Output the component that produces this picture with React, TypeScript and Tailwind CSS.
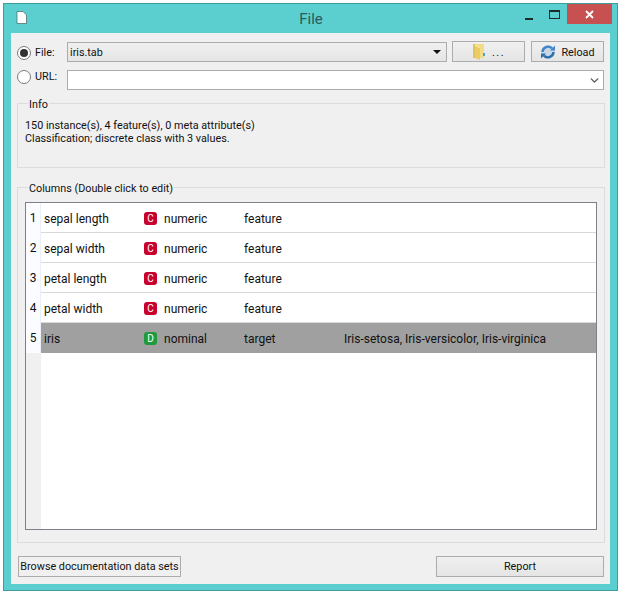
import { ChevronDown } from "lucide-react";

const rows = [
  { name: "sepal length", kind: "C", type: "numeric", role: "feature", values: "" },
  { name: "sepal width", kind: "C", type: "numeric", role: "feature", values: "" },
  { name: "petal length", kind: "C", type: "numeric", role: "feature", values: "" },
  { name: "petal width", kind: "C", type: "numeric", role: "feature", values: "" },
  { name: "iris", kind: "D", type: "nominal", role: "target", values: "Iris-setosa, Iris-versicolor, Iris-virginica" },
];

function Radio({ checked, className = "" }: { checked?: boolean; className?: string }) {
  return (
    <span className={`flex h-[14px] w-[14px] items-center justify-center rounded-full border border-[#7a7a7a] bg-white ${className}`}>
      {checked && <span className="h-[8px] w-[8px] rounded-full bg-[#333333]" />}
    </span>
  );
}

function FolderIcon() {
  return (
    <svg width="14" height="17" viewBox="0 0 14 17">
      <path d="M1 1h11v14H1z" fill="#f3dc86" />
      <path d="M1 1h2v14H1z" fill="#e2c25c" />
      <path d="M3 2l5 2v13l-5-2z" fill="#eccb62" />
      <path d="M8 4l-5-2v1l5 2z" fill="#fbeeb4" />
      <rect x="11" y="10" width="2" height="3" fill="#4aa3d8" />
    </svg>
  );
}

function ReloadIcon() {
  return (
    <svg width="16" height="16" viewBox="0 0 16 16" fill="none">
      <circle cx="8" cy="8" r="7" fill="#c9d8e6" />
      <path d="M2.5 8a5.5 5.5 0 0 1 9.5-3.6" stroke="#3f86c6" strokeWidth="2.4" />
      <path d="M10 6.6h5V1.6z" fill="#3f86c6" />
      <path d="M13.5 8A5.5 5.5 0 0 1 4 11.6" stroke="#2f6fa8" strokeWidth="2.4" />
      <path d="M6 9.4H1v5z" fill="#2f6fa8" />
    </svg>
  );
}

export default function App() {
  return (
    <div className="h-[595px] w-[622px] bg-white pl-[3px] pt-[3px] text-[10.8px] text-[#111111] [font-family:Roboto,sans-serif]">
      <div className="flex h-[588px] w-[615px] flex-col border border-[#3f9c9c] bg-[#5bcfcf]">
        {/* Title bar */}
        <div className="relative flex h-[29px] shrink-0 items-center justify-center pl-[7px] pr-[6px] pt-[2px]">
          <svg className="absolute left-[12px] top-[7px]" width="11" height="13" viewBox="0 0 11 13">
            <path d="M1 .5h6l3.5 3.5v8.5H1z" fill="#ffffff" stroke="#3a4a4a" strokeWidth="0.6" />
          </svg>
          <span className="text-[15px] leading-none text-[#2c5a5a]">File</span>
          <div className="absolute right-[5px] top-0 flex items-start">
            <span className="mr-[16px] mt-[14px] h-[2px] w-[8px] bg-[#1c2c2c]" />
            <span className="mr-[7px] mt-[6px] h-[9px] w-[11px] border border-t-2 border-[#1c2c2c]" />
            <span className="flex h-[20px] w-[45px] items-center justify-center bg-[#c75050]">
              <svg width="9" height="9" viewBox="0 0 9 9">
                <path d="M1 1l7 7M8 1L1 8" stroke="#ffffff" strokeWidth="1.8" />
              </svg>
            </span>
          </div>
        </div>

        {/* Content */}
        <div className="mx-[7px] flex h-[551px] flex-col bg-[#f0f0f0] px-[6px] pt-[8px]">
          <div className="flex h-[21px] items-center">
            <Radio checked className="mt-[2px]" />
            <span className="ml-[4px] mt-[4px] w-[32px]">File:</span>
            <div className="flex h-[20px] w-[380px] items-center justify-between border border-[#acacac] bg-gradient-to-b from-[#f0f0f0] to-[#e5e5e5] pl-[2px] pr-[5px]">
              <span className="mt-[4px]">iris.tab</span>
              <span className="h-0 w-0 border-x-[4px] border-t-[4px] border-x-transparent border-t-[#111111]" />
            </div>
            <button className="ml-[5px] flex h-[21px] w-[73px] items-center justify-center gap-[6px] border border-[#acacac] bg-gradient-to-b from-[#f0f0f0] to-[#e5e5e5]">
              <FolderIcon />
              <span className="mt-[4px] tracking-[1.5px]">...</span>
            </button>
            <button className="ml-[6px] flex h-[21px] w-[73px] items-center justify-center gap-[5px] border border-[#acacac] bg-gradient-to-b from-[#f0f0f0] to-[#e5e5e5]">
              <ReloadIcon />
              <span className="mt-[4px]">Reload</span>
            </button>
          </div>

          <div className="mt-[7px] flex h-[21px] items-center">
            <Radio className="mb-[6px]" />
            <span className="mb-[4px] ml-[4px] w-[32px]">URL:</span>
            <div className="flex h-[20px] w-[538px] items-center justify-end border border-[#acacac] bg-white pr-[2px]">
              <ChevronDown size={13} strokeWidth={2.5} className="mt-[2px] text-[#555555]" />
            </div>
          </div>

          <fieldset className="mt-[3px] h-[75px] w-[588px] border border-[#dcdcdc] px-[7px] leading-[13px]">
            <legend className="ml-[3px] px-[1px] pt-[4px] leading-[16px]">Info</legend>
            <p className="mt-[6px]">150 instance(s), 4 feature(s), 0 meta attribute(s)</p>
            <p>Classification; discrete class with 3 values.</p>
          </fieldset>

          <fieldset className="mt-[9px] h-[366px] w-[588px] border border-[#dcdcdc] px-[7px]">
            <legend className="ml-[3px] px-[1px] pt-[4px] leading-[16px]">Columns (Double click to edit)</legend>
            <div className="mt-[5px] flex h-[328px] flex-col border border-[#7c8087] bg-white text-[12px]">
              {rows.map((r, i) => (
                <div
                  key={r.name}
                  className="flex h-[30px] shrink-0 items-stretch"
                >
                  <span className="flex w-[15px] shrink-0 items-start justify-center border-r border-[#eaf0f8] bg-[#fafcff] pt-[6px]">
                    {i + 1}
                  </span>
                  <div
                    className={`flex flex-1 items-center border-b pt-[2px] ${
                      i === 4 ? "border-[#a0a0a0] bg-[#a0a0a0]" : "border-[#d8d8d8]"
                    }`}
                  >
                    <span className="ml-[3px] w-[100px]">{r.name}</span>
                    <span
                      className={`flex h-[13px] w-[13px] items-center justify-center rounded-[3px] text-[10px] leading-none text-white ${
                        r.kind === "C" ? "bg-[#c8002e]" : "bg-[#1f9a3f]"
                      }`}
                    >
                      {r.kind}
                    </span>
                    <span className="ml-[7px] w-[80px]">{r.type}</span>
                    <span className="w-[100px]">{r.role}</span>
                    <span>{r.values}</span>
                  </div>
                </div>
              ))}
              <div className="flex flex-1">
                <span className="w-[15px] bg-[#f0f0f0]" />
              </div>
            </div>
          </fieldset>

          <div className="mt-[13px] flex w-[587px] items-center justify-between pl-[1px]">
            <button className="h-[21px] w-[163px] whitespace-nowrap border border-[#acacac] bg-[#f0f0f0] pt-[2px]">Browse documentation data sets</button>
            <button className="h-[21px] w-[168px] border border-[#acacac] bg-gradient-to-b from-[#f0f0f0] to-[#e5e5e5] pt-[2px]">Report</button>
          </div>
        </div>
      </div>
    </div>
  );
}
